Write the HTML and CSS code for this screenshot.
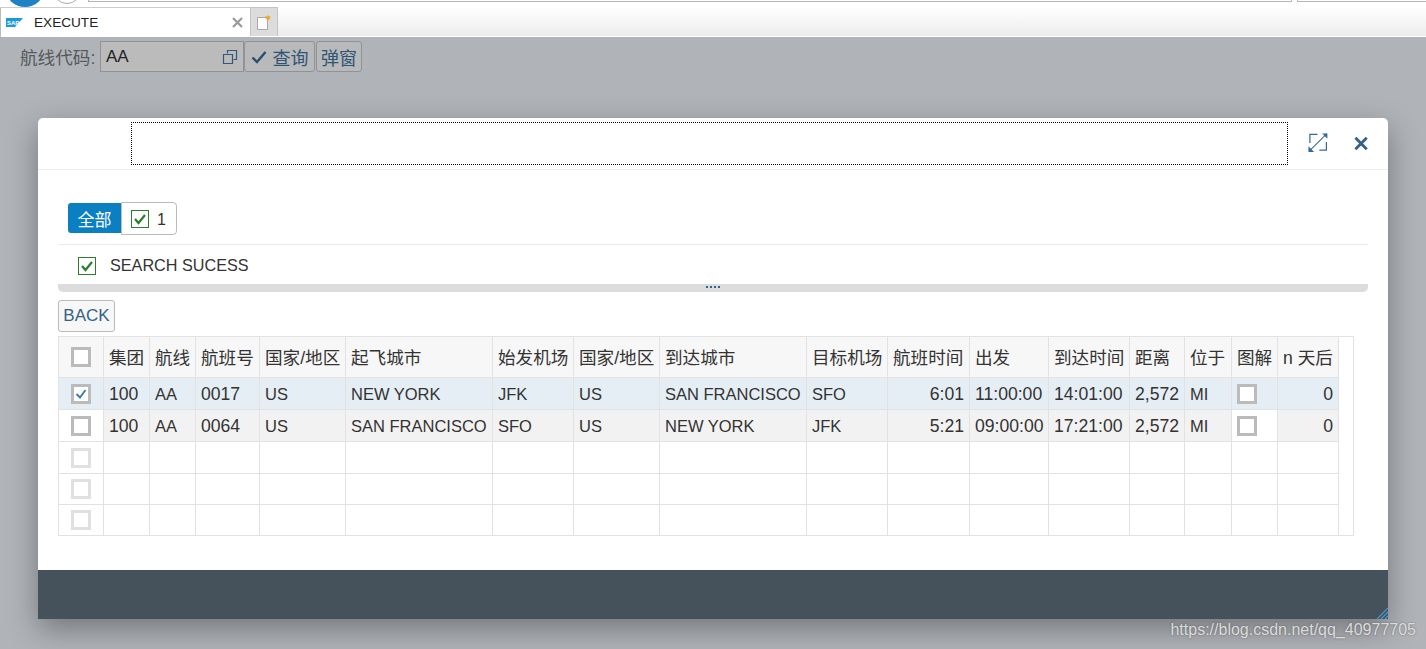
FILE: index.html
```html
<!DOCTYPE html>
<html>
<head>
	<title>EXECUTE</title>
	<link rel="stylesheet" href="styles.css">
</head>
<body>
	<div class="browser-top">
		<span class="round-blue"></span>
		<span class="round-white"></span>
		<span class="address"></span>
		<span class="search"></span>
	</div>

	<div class="tabbar">
		<div class="tab">
			<svg class="sap-logo" width="17" height="9" viewBox="0 0 17 9">
				<polygon points="0,0 17,0 9,9 0,9" fill="#1a9bd8"/>
				<text x="1" y="7" class="sap-text">SAP</text>
			</svg>
			<span class="tab-title">EXECUTE</span>
			<svg class="tab-close" width="11" height="11" viewBox="0 0 11 11">
				<path d="M1 1L10 10M10 1L1 10" stroke="#9a9a9a" stroke-width="2.2" fill="none"/>
			</svg>
		</div>
		<div class="tab-new">
			<svg width="16" height="17" viewBox="0 0 16 17">
				<path d="M1.5 3.5H11.5V15.5H1.5Z" fill="#fff" stroke="#a8a8a8"/>
				<path d="M12 0.5L12.7 2.6L14.9 2L13.6 3.8L15 5.5L12.8 5L12 7L11.2 5L9 5.5L10.4 3.8L9.1 2L11.3 2.6Z" fill="#f5a623"/>
			</svg>
		</div>
	</div>

	<div class="search-form">
		<label class="form-label">航线代码:</label>
		<div class="form-input">
			<span class="form-value">AA</span>
			<svg width="16" height="16" viewBox="0 0 16 16">
				<path d="M5.5 4.5V1.5H14.5V10.5H11.5M1.5 5.5H10.5V14.5H1.5Z" fill="none" stroke="#34587a" stroke-width="1.2"/>
			</svg>
		</div>
		<button class="form-btn btn-query" type="button">
			<svg width="16" height="14" viewBox="0 0 16 14">
				<path d="M1.5 7.5L6 12L14.5 2" fill="none" stroke="#2b4d6e" stroke-width="2.4"/>
			</svg>
			查询
		</button>
		<button class="form-btn btn-popup" type="button">弹窗</button>
	</div>

	<div class="dialog">
		<div class="dialog-head">
			<div class="dialog-title"></div>
			<svg class="icon-expand" width="21" height="21" viewBox="0 0 21 21">
				<path d="M2 11V2H10M19.500 10V18.500H12" fill="none" stroke="#346a98" stroke-width="1.300"/>
				<path d="M1 20L20 1" stroke="#346a98" stroke-width="1.100"/>
				<path d="M15 1H20.500V6.500ZM0.500 14.500V20.500H6.500Z" fill="#346a98"/>
			</svg>
			<svg class="icon-close" width="15" height="15" viewBox="0 0 15 15">
				<path d="M1.500 1.500L13.500 13.500M13.500 1.500L1.500 13.500" stroke="#346187" stroke-width="3" fill="none"/>
			</svg>
		</div>

		<div class="dialog-body">
			<div class="msg-tabs">
				<span class="msg-all">全部</span>
				<span class="msg-count">
					<svg class="ok-icon" width="18" height="18" viewBox="0 0 18 18">
						<rect x="0.500" y="0.500" width="17" height="17" fill="#fff" stroke="#2b7c2b"/>
						<path d="M4 9L7.500 13L14 5" fill="none" stroke="#2b7c2b" stroke-width="2.200"/>
					</svg>
					<span class="msg-num">1</span>
				</span>
			</div>
			<div class="msg-row">
				<svg class="ok-icon" width="18" height="18" viewBox="0 0 18 18">
					<rect x="0.500" y="0.500" width="17" height="17" fill="#fff" stroke="#2b7c2b"/>
					<path d="M4 9L7.500 13L14 5" fill="none" stroke="#2b7c2b" stroke-width="2.200"/>
				</svg>
				<span>SEARCH SUCESS</span>
			</div>
			<div class="splitter"><span class="grip"></span></div>
			<button class="back-btn" type="button">BACK</button>

			<table class="grid">
				<colgroup>
					<col class="c45"><col class="c46"><col class="c46"><col class="c64"><col class="c86"><col class="c147"><col class="c81"><col class="c86"><col class="c147"><col class="c81"><col class="c82"><col class="c79"><col class="c81"><col class="c55"><col class="c47"><col class="c46"><col class="c61"><col class="c15">
				</colgroup>
				<tr class="head-row">
					<th class="sel"><span class="box"></span></th>
					<th>集团</th><th>航线</th><th>航班号</th><th>国家/地区</th><th>起飞城市</th><th>始发机场</th><th>国家/地区</th><th>到达城市</th><th>目标机场</th><th>航班时间</th><th>出发</th><th>到达时间</th><th>距离</th><th>位于</th><th>图解</th><th>n 天后</th><th class="spare"></th>
				</tr>
				<tr class="row-selected">
					<td class="sel"><span class="box">
						<svg width="14" height="14" viewBox="0 0 14 14"><path d="M2.500 7L6 10.500L11.500 3" fill="none" stroke="#3a77ad" stroke-width="1.800"/></svg>
					</span></td>
					<td class="digits">100</td><td>AA</td><td class="digits">0017</td><td>US</td><td>NEW YORK</td><td>JFK</td><td>US</td><td>SAN FRANCISCO</td><td>SFO</td><td class="digits num">6:01</td><td class="digits">11:00:00</td><td class="digits">14:01:00</td><td class="digits num">2,572</td><td>MI</td><td class="flag"><span class="box"></span></td><td class="digits num">0</td><td class="spare"></td>
				</tr>
				<tr class="row-data">
					<td class="sel"><span class="box"></span></td>
					<td class="digits">100</td><td>AA</td><td class="digits">0064</td><td>US</td><td>SAN FRANCISCO</td><td>SFO</td><td>US</td><td>NEW YORK</td><td>JFK</td><td class="digits num">5:21</td><td class="digits">09:00:00</td><td class="digits">17:21:00</td><td class="digits num">2,572</td><td>MI</td><td class="flag"><span class="box"></span></td><td class="digits num">0</td><td class="spare"></td>
				</tr>
				<tr class="row-empty">
					<td class="sel"><span class="box box-off"></span></td>
					<td></td><td></td><td></td><td></td><td></td><td></td><td></td><td></td><td></td><td></td><td></td><td></td><td></td><td></td><td></td><td></td><td class="spare"></td>
				</tr>
				<tr class="row-empty row-short">
					<td class="sel"><span class="box box-off"></span></td>
					<td></td><td></td><td></td><td></td><td></td><td></td><td></td><td></td><td></td><td></td><td></td><td></td><td></td><td></td><td></td><td></td><td class="spare"></td>
				</tr>
				<tr class="row-empty row-short">
					<td class="sel"><span class="box box-off"></span></td>
					<td></td><td></td><td></td><td></td><td></td><td></td><td></td><td></td><td></td><td></td><td></td><td></td><td></td><td></td><td></td><td></td><td class="spare"></td>
				</tr>
			</table>
		</div>

		<div class="dialog-foot"></div>
		<svg class="resize-grip" width="11" height="11" viewBox="0 0 11 11">
			<path d="M0 11L11 0M4 11L11 4M8 11L11 8" stroke="#4a9ad4" stroke-width="1.200"/>
		</svg>
	</div>

	<div class="watermark">https://blog.csdn.net/qq_40977705</div>
</body>
</html>
```

FILE: styles.css
```css
* {
	box-sizing: border-box;
}

html, body {
	margin: 0;
	padding: 0;
	height: 100%;
	overflow: hidden;
}

body {
	position: relative;
	background-color: #b0b4b9;
	font-family: "Liberation Sans", "Noto Sans CJK SC", sans-serif;
	color: #333;
}

/* browser chrome */
.browser-top {
	display: flex;
	align-items: flex-end;
	height: 7px;
	background-color: #fff;
	overflow: hidden;
}

.round-blue {
	flex: none;
	width: 40px;
	height: 40px;
	margin-left: 5px;
	border-radius: 50%;
	background-color: #1d83c4;
}

.round-white {
	flex: none;
	width: 28px;
	height: 28px;
	margin-left: 8px;
	margin-bottom: 3px;
	border-radius: 50%;
	border: 1px solid #aaa;
}

.address {
	flex: none;
	width: 1204px;
	height: 12px;
	margin-left: 7px;
	margin-bottom: 5px;
	border: 1px solid #b5b5b5;
}

.search {
	flex: 1;
	height: 12px;
	margin-left: 5px;
	margin-bottom: 5px;
	border: 1px solid #b5b5b5;
	border-right: none;
}

.tabbar {
	display: flex;
	height: 30px;
	border-bottom: 1px solid #fff;
	background: linear-gradient(#fff, #ececec);
}

.tab {
	display: flex;
	align-items: center;
	width: 250px;
	height: 30px;
	padding-left: 5px;
	background-color: #fff;
	border-left: 1px solid #bbb;
	border-top: 1px solid #ccc;
}

.sap-logo {
	flex: none;
}

.sap-text {
	font-size: 6px;
	font-weight: bold;
	fill: #fff;
}

.tab-title {
	flex: 1;
	margin-left: 11px;
	font-size: 13.600px;
	color: #222;
}

.tab-close {
	flex: none;
	margin-right: 7px;
}

.tab-new {
	display: flex;
	align-items: center;
	justify-content: center;
	width: 28px;
	height: 29px;
	background-color: #dcdcdc;
	border: 1px solid #c4c4c4;
	border-bottom: none;
}

/* form behind the dialog */
.search-form {
	display: flex;
	align-items: center;
	height: 31px;
	margin-top: 4px;
	padding-left: 20px;
	font-size: 17.600px;
}

.form-label {
	width: 80px;
	color: #55595c;
}

.form-input {
	display: flex;
	align-items: center;
	justify-content: space-between;
	width: 144px;
	height: 31px;
	padding: 0 5px;
	background-color: #bbb;
	border: 1px solid #8f9296;
	color: #222;
}

.form-value {
	padding-top: 1px;
	font-size: 17px;
}

.form-btn {
	display: flex;
	align-items: center;
	justify-content: center;
	gap: 6px;
	height: 31px;
	padding: 0;
	background-color: #b8b9bb;
	border: 1px solid #8f9296;
	border-radius: 3px;
	font: inherit;
	font-size: 18px;
	color: #2f5474;
}

.btn-query {
	width: 71px;
}

.btn-popup {
	width: 46px;
	margin-left: 1px;
}

/* dialog */
.dialog {
	position: absolute;
	left: 38px;
	top: 118px;
	display: flex;
	flex-direction: column;
	width: 1350px;
	height: 501px;
	background-color: #fff;
	border-radius: 5px 5px 0 0;
	box-shadow: 0 10px 30px rgba(0, 0, 0, 0.35);
}

.dialog-head {
	display: flex;
	align-items: center;
	flex: none;
	height: 52px;
	padding: 4px 20px 5px 93px;
	border-bottom: 1px solid #ececec;
}

.dialog-title {
	flex: none;
	width: 1157px;
	height: 43px;
	border: 1px dotted #000;
}

.icon-expand {
	margin-left: 20px;
	margin-top: -1px;
}

.icon-close {
	margin-left: 26px;
	margin-top: 0;
}

.dialog-body {
	flex: 1;
	padding: 32px 20px 0 20px;
}

.msg-tabs {
	display: flex;
	align-items: flex-start;
	height: 43px;
	padding-left: 10px;
	border-bottom: 1px solid #ececec;
}

.msg-all {
	display: flex;
	align-items: center;
	justify-content: center;
	width: 53px;
	height: 30px;
	margin-top: 1px;
	background-color: #0a7fc2;
	border-radius: 3px 0 0 3px;
	color: #fff;
	font-size: 17px;
}

.msg-count {
	display: flex;
	align-items: center;
	gap: 8px;
	width: 56px;
	height: 33px;
	padding-left: 9px;
	border: 1px solid #bbb;
	border-radius: 0 4px 4px 0;
	font-size: 16px;
}

.msg-num {
	padding-top: 2px;
}

.msg-row {
	display: flex;
	align-items: center;
	gap: 14px;
	height: 39px;
	padding-left: 20px;
	padding-top: 2px;
	font-size: 16.200px;
}

.ok-icon {
	flex: none;
}

.splitter {
	display: flex;
	justify-content: center;
	height: 8px;
	padding-top: 2px;
	background-color: #dcdcdc;
	border-radius: 0 0 5px 5px;
}

.grip {
	width: 14px;
	height: 2px;
	background: repeating-linear-gradient(90deg, #2f6496 0, #2f6496 2px, #dcdcdc 2px, #dcdcdc 4px);
}

.back-btn {
	display: block;
	width: 57px;
	height: 32px;
	margin-top: 8px;
	padding: 0;
	background-color: #f7f7f7;
	border: 1px solid #bbb;
	border-radius: 3px;
	font: inherit;
	font-size: 17px;
	color: #346187;
}

/* table */
.grid {
	table-layout: fixed;
	width: 1296px;
	margin-top: 4px;
	border-collapse: collapse;
	font-size: 16.500px;
	color: #333;
}

.c15 { width: 15px; }
.c45 { width: 45px; }
.c46 { width: 46px; }
.c47 { width: 47px; }
.c55 { width: 55px; }
.c61 { width: 61px; }
.c64 { width: 64px; }
.c79 { width: 79px; }
.c81 { width: 81px; }
.c82 { width: 82px; }
.c86 { width: 86px; }
.c147 { width: 147px; }

.grid th, .grid td {
	padding: 1px 5px 0;
	border: 1px solid #e2e2e2;
	text-align: left;
	font-weight: normal;
	white-space: nowrap;
	overflow: hidden;
}

.grid .digits {
	font-size: 17.600px;
}

.head-row {
	height: 41px;
}

.grid .head-row th {
	padding-top: 0;
	padding-bottom: 2px;
	background-color: #f7f7f7;
	font-size: 17.600px;
}

.row-selected, .row-data, .row-empty {
	height: 32px;
}

.row-empty.row-short {
	height: 31px;
}

.row-selected td {
	background-color: #e6eef5;
}

.row-data td {
	background-color: #f2f2f2;
}

.grid .sel {
	padding: 0;
	text-align: center;
}

.row-data .sel, .row-data .flag {
	background-color: #fff;
}

.grid td.spare, .grid .head-row th.spare {
	background-color: #fff;
	border-top: none;
	border-bottom: none;
}

.grid .head-row th.spare {
	border-top: 1px solid #e2e2e2;
}

.grid tr:last-child td.spare {
	border-bottom: 1px solid #e2e2e2;
}

.grid .num {
	text-align: right;
}

.box {
	display: inline-flex;
	align-items: center;
	justify-content: center;
	width: 20px;
	height: 20px;
	vertical-align: middle;
	background-color: #fff;
	border: 3px solid #bbb;
}

.box-off {
	border-color: #e0e0e0;
}

.dialog-foot {
	flex: none;
	height: 49px;
	background-color: #46525b;
}

.resize-grip {
	position: absolute;
	right: 0;
	bottom: 0;
}

.watermark {
	position: absolute;
	right: 10px;
	bottom: 10px;
	font-size: 16px;
	color: #dcdcdc;
	text-shadow: 0 0 2px rgba(60, 60, 60, 0.6);
}
```
